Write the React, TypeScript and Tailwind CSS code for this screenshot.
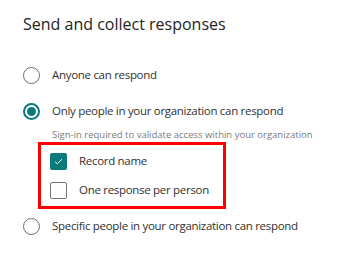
function Radio({ checked }: { checked?: boolean }) {
	if (checked) {
		return (
			<span className="flex h-[17px] w-[17px] shrink-0 items-center justify-center rounded-full border-2 border-[#0b7a7b]">
				<span className="h-[9px] w-[9px] rounded-full bg-[#0b7a7b]" />
			</span>
		);
	}
	return <span className="h-[17px] w-[17px] shrink-0 rounded-full border border-[#6e6e6e]" />;
}

function Checkbox({ checked }: { checked?: boolean }) {
	if (checked) {
		return (
			<span className="flex h-[17px] w-[17px] shrink-0 items-center justify-center rounded-[2px] bg-[#0b7a7b]">
				<svg width="9" height="7" viewBox="0 0 9 7" fill="none">
					<path d="M1 3.6 3.3 5.8 8 1.2" stroke="white" strokeWidth="1" />
				</svg>
			</span>
		);
	}
	return <span className="h-[17px] w-[17px] shrink-0 rounded-[2px] border border-[#777]" />;
}

export default function App() {
	return (
		<div className="h-[257px] w-[347px] bg-white font-['Open_Sans',sans-serif] text-[#323130]">
			<h1 className="pl-[23px] pt-[13px] text-[16px] leading-[22px] text-[#252423]">Send and collect responses</h1>

			<div className="mt-[30px] flex h-[20px] items-center gap-[12px] pl-[23px]">
				<Radio />
				<span className="whitespace-nowrap text-[11.5px] tracking-[-0.3px]">Anyone can respond</span>
			</div>

			<div className="mt-[16px] flex h-[20px] items-center gap-[12px] pl-[23px]">
				<Radio checked />
				<span className="whitespace-nowrap text-[11.5px] tracking-[-0.3px]">
					Only people in your organization can respond
				</span>
			</div>
			<p className="mt-[7px] whitespace-nowrap pl-[52px] text-[9.5px] leading-[14px] text-[#7a7a7a]">
				Sign-in required to validate access within your organization
			</p>

			<div className="ml-[38px] flex w-[188px] flex-col gap-[9px] border-[3px] border-[#ff0000] pb-[6px] pl-[9px] pt-[6px]">
				<div className="flex h-[20px] items-center gap-[12px]">
					<Checkbox checked />
					<span className="whitespace-nowrap text-[11.5px] tracking-[-0.3px]">Record name</span>
				</div>
				<div className="flex h-[20px] items-center gap-[12px]">
					<Checkbox />
					<span className="whitespace-nowrap text-[11.5px] tracking-[-0.3px]">One response per person</span>
				</div>
			</div>

			<div className="mt-[7px] flex h-[20px] items-center gap-[12px] pl-[23px]">
				<Radio />
				<span className="whitespace-nowrap text-[11.5px] tracking-[-0.3px]">
					Specific people in your organization can respond
				</span>
			</div>
		</div>
	);
}
